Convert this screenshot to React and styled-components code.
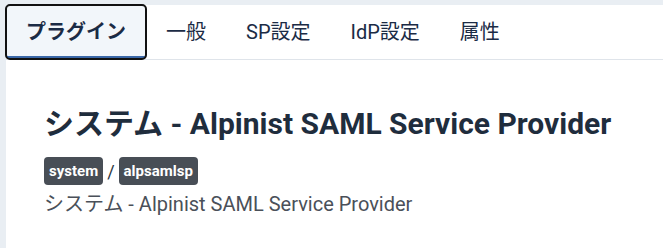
import { useState } from "react";
import styled, { createGlobalStyle } from "styled-components";

const tabs = ["プラグイン", "一般", "SP設定", "IdP設定", "属性"];

const App = () => {
  const [active, setActive] = useState(0);

  return (
    <>
      <GlobalStyle />
      <Panel>
        <TabBar>
          {tabs.map((t, i) => (
            <Tab key={t} $active={i === active} onClick={() => setActive(i)}>
              {t}
            </Tab>
          ))}
        </TabBar>
        <Content>
          <Title>システム - Alpinist SAML Service Provider</Title>
          <Path>
            <Badge>system</Badge>
            <Slash>/</Slash>
            <Badge>alpsamlsp</Badge>
          </Path>
          <Description>システム - Alpinist SAML Service Provider</Description>
        </Content>
      </Panel>
    </>
  );
};

export default App;

const GlobalStyle = createGlobalStyle`
  html, body {
    margin: 0;
    background: #e9eef3;
    font-family: Roboto, "Noto Sans CJK JP", sans-serif;
  }
`;

const Panel = styled.div`
  margin: 5px 0 0 6px;
  background: #fff;
  min-height: 243px;
`;

const TabBar = styled.div`
  display: flex;
  border-bottom: 1px solid #dfe4ea;
`;

const Tab = styled.button`
  box-sizing: border-box;
  height: 54px;
  padding: 0 20px;
  border: none;
  border-bottom: 3px solid ${(p) => (p.$active ? "#3b68a8" : "transparent")};
  border-radius: 4px;
  background: ${(p) => (p.$active ? "#f2f6fa" : "transparent")};
  outline: ${(p) => (p.$active ? "2px solid #111" : "none")};
  outline-offset: -1px;
  font-family: Roboto, "Noto Sans CJK JP", sans-serif;
  font-size: 20px;
  font-weight: ${(p) => (p.$active ? 700 : 400)};
  color: #1b2b45;
  cursor: pointer;
`;

const Content = styled.div`
  padding: 46px 38px 0;
`;

const Title = styled.h1`
  margin: 0;
  font-size: 30px;
  line-height: 1.2;
  font-weight: 700;
  color: #1f2d3d;
`;

const Path = styled.div`
  display: flex;
  align-items: center;
  gap: 4px;
  margin-top: 15px;
`;

const Badge = styled.span`
  display: inline-flex;
  align-items: center;
  height: 28px;
  padding: 0 5px;
  border-radius: 4px;
  background: #484e56;
  color: #fff;
  font-size: 15px;
  font-weight: 700;
`;

const Slash = styled.span`
  font-size: 18px;
  color: #2b3440;
`;

const Description = styled.p`
  margin: 5px 0 0;
  font-size: 20px;
  line-height: 1.4;
  color: #4a5059;
`;
